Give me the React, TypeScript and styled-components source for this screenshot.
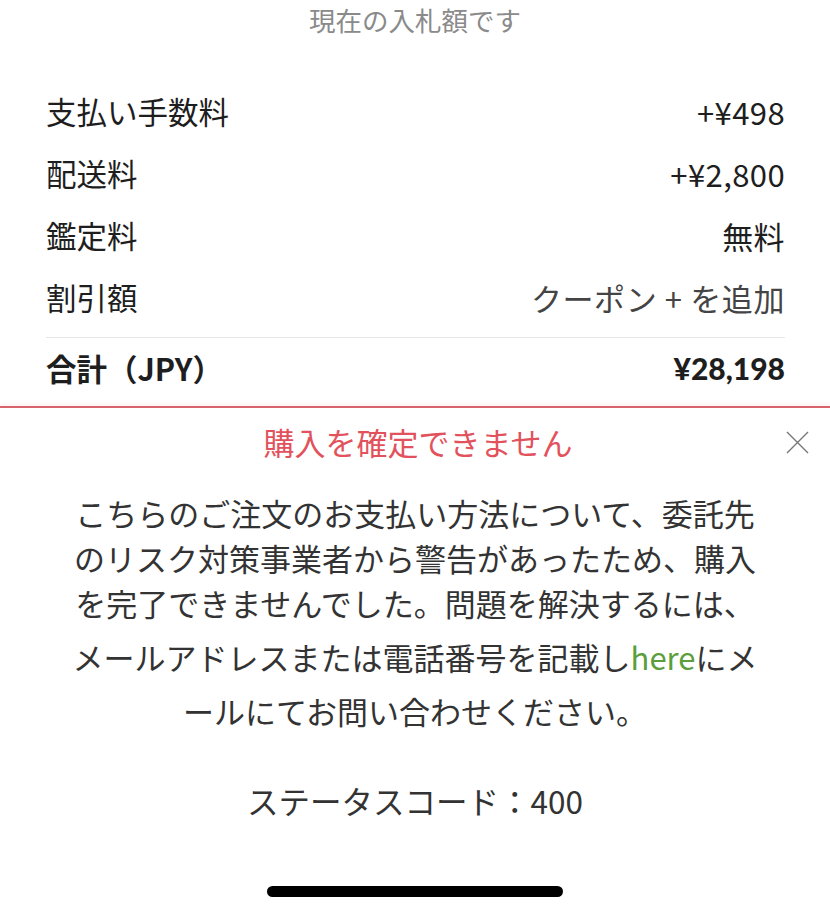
import React from "react";
import styled, { createGlobalStyle } from "styled-components";

const GlobalStyle = createGlobalStyle`
  body {
    margin: 0;
    background: #fff;
    font-family: "Noto Sans CJK JP", "Noto Sans", sans-serif;
    color: #222;
  }
`;

const Page = styled.div`
  width: 830px;
  height: 917px;
  display: flex;
  flex-direction: column;
  overflow: hidden;
`;

const BidNote = styled.p`
  margin: 0;
  text-align: center;
  font-size: 26.5px;
  line-height: 40px;
  color: #8a8a8a;
`;

const Summary = styled.div`
  display: flex;
  flex-direction: column;
  margin-top: 40px;
  padding: 0 45px 0 46px;
`;

const Row = styled.div<{ $total?: boolean }>`
  display: flex;
  justify-content: space-between;
  align-items: center;
  height: ${(p) => (p.$total ? "60px" : "62px")};
  font-size: 30.5px;
  font-weight: ${(p) => (p.$total ? 700 : 400)};
  color: #1e1e1e;
`;

const Value = styled.span<{ $muted?: boolean }>`
  font-size: 31px;
  color: ${(p) => (p.$muted ? "#444" : "#1e1e1e")};
  letter-spacing: ${(p) => (p.$muted ? "0.6px" : "0.4px")};
`;

const TotalValue = styled.span`
  font-family: "Lato", "Noto Sans", sans-serif;
  font-weight: 900;
  font-size: 30px;
`;

const Divider = styled.hr`
  margin: 9px 0 0;
  border: 0;
  border-top: 1px solid #e6e6e6;
`;

const Sheet = styled.section`
  margin-top: 8px;
  border-top: 2px solid #d8636d;
  box-shadow: 0 -3px 4px rgba(216, 99, 109, 0.08);
  display: flex;
  flex-direction: column;
  align-items: center;
`;

const SheetHeader = styled.div`
  width: 100%;
  display: grid;
  grid-template-columns: 1fr auto 1fr;
  align-items: center;
  margin-top: 12px;
  height: 44px;
`;

const SheetTitle = styled.h2`
  grid-column: 2;
  margin: 0 0 0 6px;
  font-size: 31px;
  font-weight: 400;
  line-height: 44px;
  color: #e2525d;
`;

const CloseButton = styled.button`
  justify-self: end;
  margin-right: 21px;
  width: 24px;
  height: 24px;
  padding: 0;
  border: 0;
  background: none;
  display: flex;
  align-items: center;
  justify-content: center;
`;

const Message = styled.p`
  margin: 26px 0 0;
  width: 690px;
  text-align: center;
  font-size: 31px;
  line-height: 45px;
  color: #333;
`;

const HereLink = styled.a`
  line-height: 63px;
  color: #5b9e3b;
  text-decoration: none;
`;

const StatusCode = styled.p`
  margin: 45px 0 0;
  font-size: 31.5px;
  line-height: 45px;
  color: #333;
`;

const HomeIndicator = styled.div`
  margin: 63px auto 0;
  width: 296px;
  height: 11px;
  border-radius: 6px;
  background: #000;
`;

const rows = [
  { label: "支払い手数料", value: "+¥498" },
  { label: "配送料", value: "+¥2,800" },
  { label: "鑑定料", value: "無料" },
  { label: "割引額", value: "クーポン + を追加", muted: true },
];

const App = (): JSX.Element => {
  return (
    <Page>
      <GlobalStyle />
      <BidNote>現在の入札額です</BidNote>
      <Summary>
        {rows.map((r) => (
          <Row key={r.label}>
            <span>{r.label}</span>
            <Value $muted={r.muted}>{r.value}</Value>
          </Row>
        ))}
        <Divider />
        <Row $total>
          <span>合計（JPY）</span>
          <TotalValue>¥28,198</TotalValue>
        </Row>
      </Summary>
      <Sheet>
        <SheetHeader>
          <SheetTitle>購入を確定できません</SheetTitle>
          <CloseButton aria-label="閉じる">
            <svg width="23" height="23" viewBox="0 0 23 23">
              <path d="M1 1L22 22M22 1L1 22" stroke="#777" strokeWidth="1.4" />
            </svg>
          </CloseButton>
        </SheetHeader>
        <Message>
          こちらのご注文のお支払い方法について、委託先のリスク対策事業者から警告があったため、購入を完了できませんでした。問題を解決するには、メールアドレスまたは電話番号を記載し
          <HereLink href="#">here</HereLink>
          にメールにてお問い合わせください。
        </Message>
        <StatusCode>ステータスコード：400</StatusCode>
      </Sheet>
      <HomeIndicator />
    </Page>
  );
};

export default App;
